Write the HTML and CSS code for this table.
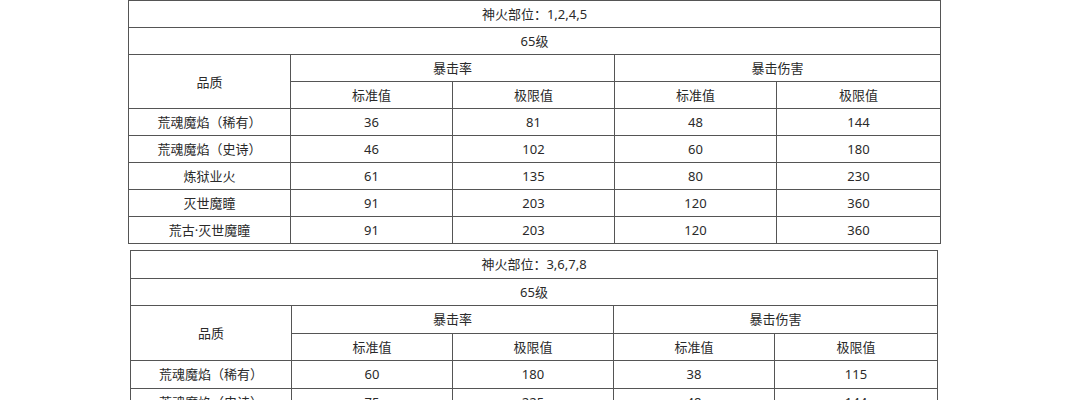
FILE: index.html
```html
<!DOCTYPE html>
<html lang="zh-CN">
<head>
<meta charset="utf-8">
<title>神火部位</title>
<link rel="stylesheet" href="styles.css">
</head>
<body>
<div class="page">
  <table class="stats stats-a">
    <colgroup>
      <col class="c1"><col class="c2"><col class="c3"><col class="c4"><col class="c5">
    </colgroup>
    <tr><td colspan="5">神火部位：1,2,4,5</td></tr>
    <tr><td colspan="5">65级</td></tr>
    <tr><td rowspan="2">品质</td><td colspan="2">暴击率</td><td colspan="2">暴击伤害</td></tr>
    <tr><td>标准值</td><td>极限值</td><td>标准值</td><td>极限值</td></tr>
    <tr><td>荒魂魔焰（稀有）</td><td>36</td><td>81</td><td>48</td><td>144</td></tr>
    <tr><td>荒魂魔焰（史诗）</td><td>46</td><td>102</td><td>60</td><td>180</td></tr>
    <tr><td>炼狱业火</td><td>61</td><td>135</td><td>80</td><td>230</td></tr>
    <tr><td>灭世魔瞳</td><td>91</td><td>203</td><td>120</td><td>360</td></tr>
    <tr><td>荒古·灭世魔瞳</td><td>91</td><td>203</td><td>120</td><td>360</td></tr>
  </table>

  <table class="stats stats-b">
    <colgroup>
      <col class="c1"><col class="c2"><col class="c3"><col class="c4"><col class="c5">
    </colgroup>
    <tr><td colspan="5">神火部位：3,6,7,8</td></tr>
    <tr><td colspan="5">65级</td></tr>
    <tr><td rowspan="2">品质</td><td colspan="2">暴击率</td><td colspan="2">暴击伤害</td></tr>
    <tr><td>标准值</td><td>极限值</td><td>标准值</td><td>极限值</td></tr>
    <tr><td>荒魂魔焰（稀有）</td><td>60</td><td>180</td><td>38</td><td>115</td></tr>
    <tr><td>荒魂魔焰（史诗）</td><td>75</td><td>225</td><td>48</td><td>144</td></tr>
  </table>
</div>
</body>
</html>
```

FILE: styles.css
```css
html, body {
  margin: 0;
  padding: 0;
  background: #ffffff;
}

.page {
  padding-top: 0;
  font-family: "Noto Sans", "Noto Sans CJK SC", sans-serif;
  font-size: 13px;
  color: #2a2a2a;
}

.stats {
  border-collapse: collapse;
  table-layout: fixed;
}

.stats td {
  border: 1px solid #555555;
  text-align: center;
  vertical-align: middle;
  padding: 0;
  line-height: 16px;
}

.stats-a {
  width: 812px;
  margin-left: 128px;
}

.stats-a tr {
  height: 27px;
}

.stats-a .c1 { width: 162px; }
.stats-a .c2 { width: 162px; }
.stats-a .c3 { width: 162px; }
.stats-a .c4 { width: 162px; }
.stats-a .c5 { width: 164px; }

.stats-b {
  width: 807px;
  margin-left: 130px;
  margin-top: 6px;
}

.stats-b tr {
  height: 27.5px;
}

.stats-b .c1 { width: 161px; }
.stats-b .c2 { width: 161px; }
.stats-b .c3 { width: 161px; }
.stats-b .c4 { width: 161px; }
.stats-b .c5 { width: 163px; }
```
